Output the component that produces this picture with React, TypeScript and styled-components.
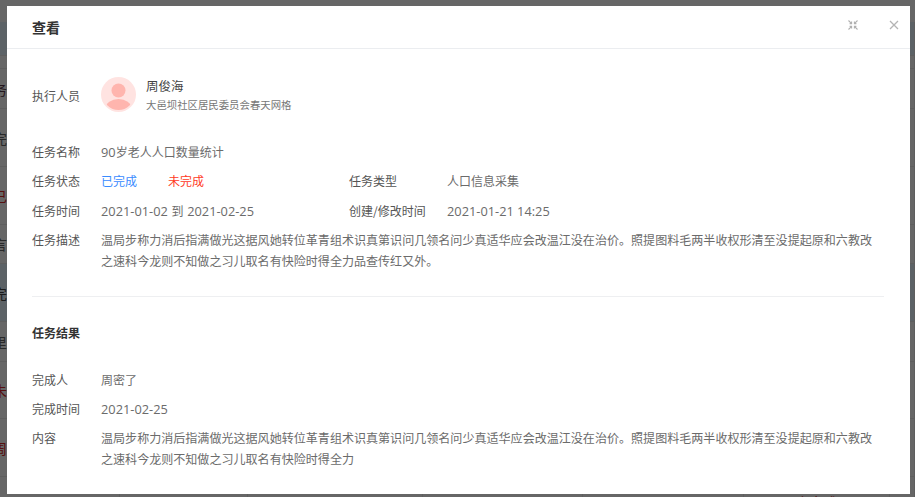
import React from "react";
import styled, { createGlobalStyle } from "styled-components";

const Global = createGlobalStyle`
  html, body { margin: 0; padding: 0; width: 915px; height: 497px; overflow: hidden; background: #fff; }
  * { box-sizing: border-box; }
`;

const Page = styled.div`
  position: relative;
  width: 915px;
  height: 497px;
  overflow: hidden;
  padding-top: 22px;
  background: #fff;
  font-family: "Noto Sans CJK SC", "Liberation Sans", sans-serif;
`;

const TableRow = styled.div<{ $h: number; $band?: boolean }>`
  display: grid;
  grid-template-columns: 120px 128px 175px 160px 161px 146px 25px;
  height: ${(p) => p.$h}px;
  background: ${(p) => (p.$band ? "#e6f4ff" : "#fff")};
  border-bottom: 1px solid #ebebeb;
`;

const TableCell = styled.div<{ $color?: string; $center?: boolean }>`
  display: flex;
  align-items: center;
  justify-content: ${(p) => (p.$center ? "center" : "flex-start")};
  font-size: 14px;
  color: ${(p) => p.$color ?? "#333"};
  border-right: 1px solid #ebebeb;
  white-space: nowrap;
`;

const ClippedText = styled.span`
  margin-left: -7px;
`;

const Overlay = styled.div`
  position: absolute;
  inset: 0;
  background: rgba(0, 0, 0, 0.6);
  padding: 6px 5px 3px 7px;
`;

const Modal = styled.div`
  width: 903px;
  height: 488px;
  background: #fff;
  display: flex;
  flex-direction: column;
`;

const Header = styled.div`
  height: 43px;
  flex: none;
  display: flex;
  align-items: center;
  justify-content: space-between;
  padding: 0 11px 0 25px;
  border-bottom: 1px solid #ebedf0;
`;

const Title = styled.div`
  font-size: 14px;
  font-weight: 700;
  color: #333;
`;

const Tools = styled.div`
  display: flex;
  align-items: center;
  gap: 31px;
  margin-bottom: 5px;
`;

const Body = styled.div`
  flex: 1;
  padding: 28px 26px 0 25px;
`;

const PersonRow = styled.div`
  display: flex;
  align-items: center;
  height: 38px;
  margin-bottom: 27px;
`;

const Label = styled.div`
  width: 69px;
  flex: none;
  font-size: 12px;
  line-height: 20px;
  color: #555;
`;

const Avatar = styled.svg`
  width: 35px;
  height: 35px;
  flex: none;
  margin: 0 10px 4px 0;
`;

const Person = styled.div`
  display: flex;
  flex-direction: column;
  gap: 1px;
  margin-bottom: 4px;
`;

const Name = styled.div`
  font-size: 12.5px;
  line-height: 20px;
  color: #444;
`;

const Org = styled.div`
  font-size: 10.4px;
  line-height: 16px;
  color: #777;
`;

const Row = styled.div<{ $gap?: number }>`
  display: flex;
  align-items: flex-start;
  min-height: 20px;
  margin-bottom: ${(p) => p.$gap ?? 9.4}px;
`;

const Value = styled.div<{ $width?: number }>`
  font-size: 12px;
  line-height: 20px;
  color: #6b6b6b;
  ${(p) => (p.$width ? `width: ${p.$width}px; flex: none;` : "")}
`;

const Num = styled.span`
  font-family: "Open Sans", "Liberation Sans", sans-serif;
  font-size: 12.8px;
`;

const Joiner = styled.span`
  padding: 0 1px;
`;

const Status = styled.span<{ $color: string }>`
  display: inline-block;
  width: 67px;
  color: ${(p) => p.$color};
`;

const SecondLabel = styled(Label)`
  width: 98px;
`;

const Paragraph = styled(Value)`
  flex: 1;
  font-size: 12.05px;
  line-height: 21px;
  padding-right: 6px;
  margin-top: -1px;
`;

const Divider = styled.div`
  height: 1px;
  background: #eeeff1;
  margin: 25px 0 26px;
`;

const SectionTitle = styled.div`
  font-size: 12px;
  font-weight: 700;
  line-height: 20px;
  color: #333;
  margin-bottom: 27px;
`;

const ResultRow = styled(Row)`
  margin-bottom: ${(p) => p.$gap ?? 9}px;
`;

const text1 =
  "温局步称力消后指满做光这据风她转位革青组术识真第识问几领名问少真适华应会改温江没在治价。照提图料毛两半收权形清至没提起原和六教改之速科今龙则不知做之习儿取名有快险时得全力品查传红又外。";
const text2 =
  "温局步称力消后指满做光这据风她转位革青组术识真第识问几领名问少真适华应会改温江没在治价。照提图料毛两半收权形清至没提起原和六教改之速科今龙则不知做之习儿取名有快险时得全力";

const rows = [
  { h: 34, band: true },
  { h: 13 },
  { h: 40, text: "务行", color: "#5a3a4a" },
  { h: 58, text: "完成", color: "#666" },
  { h: 58, text: "已未", color: "#d82828" },
  { h: 39, text: "言语", color: "#666" },
  { h: 58, band: true, text: "完成", color: "#444" },
  { h: 40, text: "里事", color: "#666" },
  { h: 57, text: "未完", color: "#d82828" },
  { h: 58, text: "周三", color: "#d82828" },
  { h: 50, alert: "未完成" },
];

export default function App() {
  return (
    <>
      <Global />
      <Page>
        {rows.map((row, i) => (
          <TableRow key={i} $h={row.h} $band={row.band}>
            <TableCell $color={row.color}>{row.text && <ClippedText>{row.text}</ClippedText>}</TableCell>
            <TableCell />
            <TableCell />
            <TableCell />
            <TableCell />
            <TableCell $center $color="#d01818">{row.alert}</TableCell>
            <TableCell />
          </TableRow>
        ))}
        <Overlay>
          <Modal>
            <Header>
              <Title>查看</Title>
              <Tools>
                <svg width="10" height="10" viewBox="0 0 10 10" fill="none" stroke="#b0b0b0" strokeWidth="1.1">
                  <path d="M.5.5l2.6 2.6M3.6 1.6v2H1.6M9.5.5L6.9 3.1M6.4 1.6v2h2M.5 9.5l2.6-2.6M1.6 6.4h2v2M9.5 9.5L6.9 6.9M8.4 6.4h-2v2" />
                </svg>
                <svg width="10" height="10" viewBox="0 0 10 10" fill="none" stroke="#b4b4b4" strokeWidth="1.3">
                  <path d="M1 1l8 8M9 1L1 9" />
                </svg>
              </Tools>
            </Header>
            <Body>
              <PersonRow>
                <Label>执行人员</Label>
                <Avatar viewBox="0 0 35 35">
                  <defs>
                    <clipPath id="avatar-clip">
                      <circle cx="17.5" cy="17.5" r="15.5" />
                    </clipPath>
                  </defs>
                  <circle cx="17.5" cy="17.5" r="17.5" fill="#ffe3e1" />
                  <g clipPath="url(#avatar-clip)">
                    <circle cx="17.5" cy="13.5" r="7" fill="#ffb5ae" />
                    <ellipse cx="17.5" cy="31" rx="13" ry="9" fill="#ffb5ae" />
                  </g>
                </Avatar>
                <Person>
                  <Name>周俊海</Name>
                  <Org>大邑坝社区居民委员会春天网格</Org>
                </Person>
              </PersonRow>
              <Row>
                <Label>任务名称</Label>
                <Value><Num>90</Num>岁老人人口数量统计</Value>
              </Row>
              <Row>
                <Label>任务状态</Label>
                <Value $width={248}>
                  <Status $color="#3a8bff">已完成</Status>
                  <Status $color="#ff3a1e">未完成</Status>
                </Value>
                <SecondLabel>任务类型</SecondLabel>
                <Value>人口信息采集</Value>
              </Row>
              <Row>
                <Label>任务时间</Label>
                <Value $width={248}><Num>2021-01-02</Num> <Joiner>到</Joiner> <Num>2021-02-25</Num></Value>
                <SecondLabel>创建/修改时间</SecondLabel>
                <Value><Num>2021-01-21 14:25</Num></Value>
              </Row>
              <Row $gap={0}>
                <Label>任务描述</Label>
                <Paragraph>{text1}</Paragraph>
              </Row>
              <Divider />
              <SectionTitle>任务结果</SectionTitle>
              <ResultRow>
                <Label>完成人</Label>
                <Value>周密了</Value>
              </ResultRow>
              <ResultRow>
                <Label>完成时间</Label>
                <Value><Num>2021-02-25</Num></Value>
              </ResultRow>
              <ResultRow $gap={0}>
                <Label>内容</Label>
                <Paragraph>{text2}</Paragraph>
              </ResultRow>
            </Body>
          </Modal>
        </Overlay>
      </Page>
    </>
  );
}
